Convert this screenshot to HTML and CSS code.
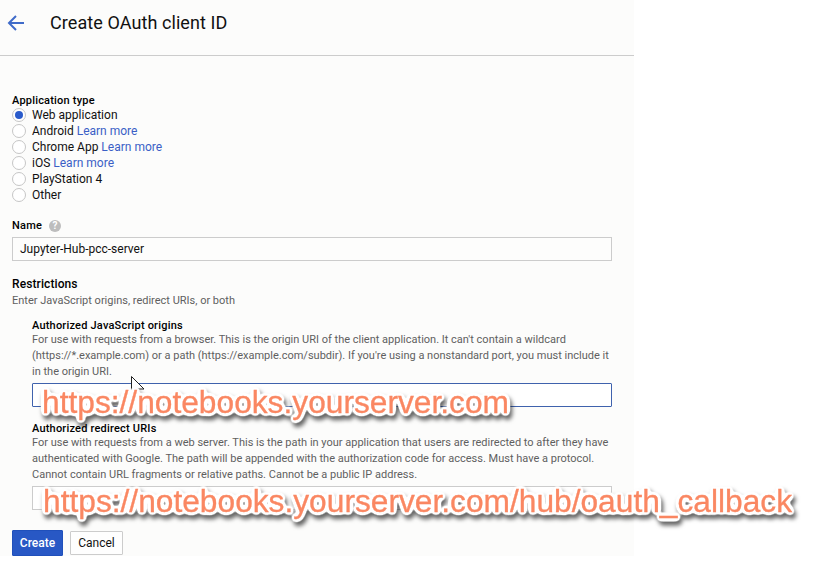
FILE: index.html
```
<!DOCTYPE html>
<html lang="en">
<head>
<meta charset="utf-8">
<title>Create OAuth client ID</title>
<link rel="stylesheet" href="styles.css">
</head>
<body>
<main class="panel">
  <header class="header">
    <svg class="back" width="18" height="18" viewBox="0 0 18 18"><path d="M9 2 L2 9 L9 16 M2 9 H17"/></svg>
    <h1><span>Create OAuth client ID</span></h1>
  </header>
  <form class="form">
    <h2 class="label">Application type</h2>
    <div class="options">
      <label class="option"><i class="radio checked"></i><span>Web application</span></label>
      <label class="option"><i class="radio"></i><span>Android <a>Learn more</a></span></label>
      <label class="option"><i class="radio"></i><span>Chrome App <a>Learn more</a></span></label>
      <label class="option"><i class="radio"></i><span>iOS <a>Learn more</a></span></label>
      <label class="option"><i class="radio"></i><span>PlayStation 4</span></label>
      <label class="option"><i class="radio"></i><span>Other</span></label>
    </div>
    <h2 class="label name-label">Name <i class="help">?</i></h2>
    <div class="input name">Jupyter-Hub-pcc-server</div>
    <h2 class="label restrictions">Restrictions</h2>
    <p class="hint">Enter JavaScript origins, redirect URIs, or both</p>
    <section class="group origins">
      <h3 class="label">Authorized JavaScript origins</h3>
      <p class="hint">For use with requests from a browser. This is the origin URI of the client application. It can't contain a wildcard<br>(https://*.example.com) or a path (https://example.com/subdir). If you're using a nonstandard port, you must include it<br>in the origin URI.</p>
      <div class="input focused"></div>
    </section>
    <section class="group redirects">
      <h3 class="label">Authorized redirect URIs</h3>
      <p class="hint">For use with requests from a web server. This is the path in your application that users are redirected to after they have<br>authenticated with Google. The path will be appended with the authorization code for access. Must have a protocol.<br>Cannot contain URL fragments or relative paths. Cannot be a public IP address.</p>
      <div class="input"></div>
    </section>
    <div class="actions">
      <button class="btn primary" type="button">Create</button>
      <button class="btn" type="button">Cancel</button>
    </div>
  </form>
</main>
<svg class="overlay" width="814" height="565" viewBox="0 0 814 565">
  <defs>
    <filter id="sticker" filterUnits="userSpaceOnUse" x="0" y="360" width="814" height="205" color-interpolation-filters="sRGB">
      <feGaussianBlur in="SourceAlpha" stdDeviation="2.2"/>
      <feComponentTransfer result="edge"><feFuncR type="linear" slope="0" intercept="1"/><feFuncG type="linear" slope="0" intercept="1"/><feFuncB type="linear" slope="0" intercept="1"/><feFuncA type="linear" slope="14" intercept="-0.4"/></feComponentTransfer>
      <feDropShadow in="edge" dx="2" dy="4" stdDeviation="2" flood-color="#000" flood-opacity=".6" result="back"/>
      <feMerge><feMergeNode in="back"/><feMergeNode in="SourceGraphic"/></feMerge>
    </filter>
  </defs>
  <path class="cursor" d="M131.5 376.5 V392 L135 389 L144 389 Z"/>
  <g class="callout">
    <text x="42" y="412.5" textLength="467" lengthAdjust="spacingAndGlyphs">https://notebooks.yourserver.com</text>
  </g>
  <g class="callout">
    <text x="43" y="511.5" textLength="749" lengthAdjust="spacingAndGlyphs">https://notebooks.yourserver.com/hub/oauth_callback</text>
  </g>
</svg>
</body>
</html>
```
FILE: styles.css
```
* { box-sizing: border-box; }
body { margin: 0; width: 814px; height: 565px; overflow: hidden; background: #fff; font: 12px/16px Roboto, sans-serif; color: #111; position: relative; }
h1, h2, h3, p { margin: 0; }
.panel { width: 634px; height: 556px; background: #fcfcfb; }
.header { height: 56px; padding: 0 0 10px 7px; display: flex; align-items: center; gap: 25px; border-bottom: 1px solid #ccc; }
.back { fill: none; stroke: #3f6bc9; stroke-width: 2; }
h1 { font-size: 18px; line-height: 24px; font-weight: 400; letter-spacing: .08px; }
.form { padding: 38px 22px 0 12px; }
.label { font-size: 11px; line-height: 14px; font-weight: 500; letter-spacing: .2px; color: #000; }
.options { margin-top: -1px; }
.option { display: flex; align-items: center; height: 16px; gap: 6px; }
.radio { width: 14px; height: 14px; border: 1px solid #c6c6c6; border-radius: 50%; background: #fff; display: grid; place-items: center; }
.checked::after { content: ""; width: 8px; height: 8px; border-radius: 50%; background: #2a5bcb; }
a { color: #3b5fc6; }
.name-label { display: flex; align-items: center; gap: 7px; margin-top: 16px; }
.help { width: 12px; height: 12px; border-radius: 50%; background: #bdbdbd; color: #fff; font: 700 10px/12px Roboto, sans-serif; text-align: center; letter-spacing: 0; }
.input { height: 24px; border: 1px solid #ccc; background: #fff; padding: 0 7px; line-height: 22px; }
.name { margin-top: 4px; width: 600px; background: #fdfdfc; }
.restrictions { font-size: 12px; margin-top: 16px; letter-spacing: .1px; }
.hint { font-size: 11px; line-height: 16px; color: #5f5f5f; white-space: nowrap; }
.restrictions + .hint { margin-top: 2px; }
.group { margin-left: 20px; width: 580px; }
.origins { margin-top: 10px; }
.origins .hint { margin-top: -1px; }
.redirects { margin-top: 15px; }
.redirects .hint { margin-top: -1px; }
.group .input { margin-top: 3px; }
.group .focused { border-color: #3f62ad; border-radius: 1px; }
.actions { display: flex; align-items: center; gap: 7px; margin-top: 20px; }
.btn { width: 53px; height: 24px; padding: 0; border: 1px solid #ccc; border-radius: 1px; background: #fefefe; font: 12px/20px Roboto, sans-serif; color: #111; }
.primary { width: 51px; height: 26px; background: #2858c5; border-color: #2050bb; color: #fff; font-weight: 500; }
.overlay { position: absolute; left: 0; top: 0; pointer-events: none; }
.cursor { fill: #fff; stroke: #222; stroke-width: 1; }
.callout { font: 31px "Liberation Sans", sans-serif; filter: url(#sticker); }
.callout text { fill: #fa8762; stroke: #fa8762; stroke-width: .3px; }
```
